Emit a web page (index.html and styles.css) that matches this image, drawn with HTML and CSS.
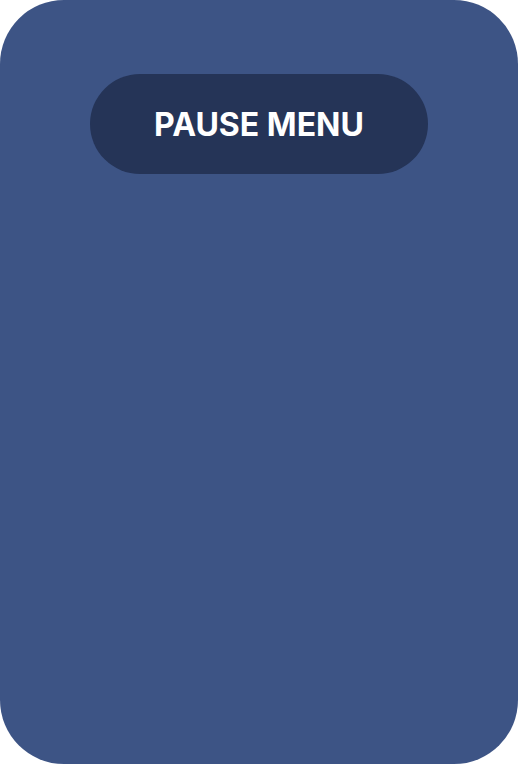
FILE: index.html
```html
<!DOCTYPE html>
<html>
<head>
<meta charset="utf-8">
<link rel="stylesheet" href="styles.css">
</head>
<body>
<div class="card">
  <div class="pill">PAUSE MENU</div>
</div>
</body>
</html>
```
FILE: styles.css
```css
html, body {
  margin: 0;
  padding: 0;
  background: #ffffff;
}
.card {
  width: 518px;
  height: 764px;
  box-sizing: border-box;
  background: #3d5485;
  border-radius: 64px;
  padding-top: 74px;
  display: flex;
  flex-direction: column;
  align-items: center;
}
.pill {
  width: 338px;
  height: 100px;
  border-radius: 50px;
  background: #253457;
  color: #ffffff;
  font-family: Inter, "Liberation Sans", sans-serif;
  font-weight: 700;
  font-size: 32px;
  display: flex;
  align-items: center;
  justify-content: center;
}
```
